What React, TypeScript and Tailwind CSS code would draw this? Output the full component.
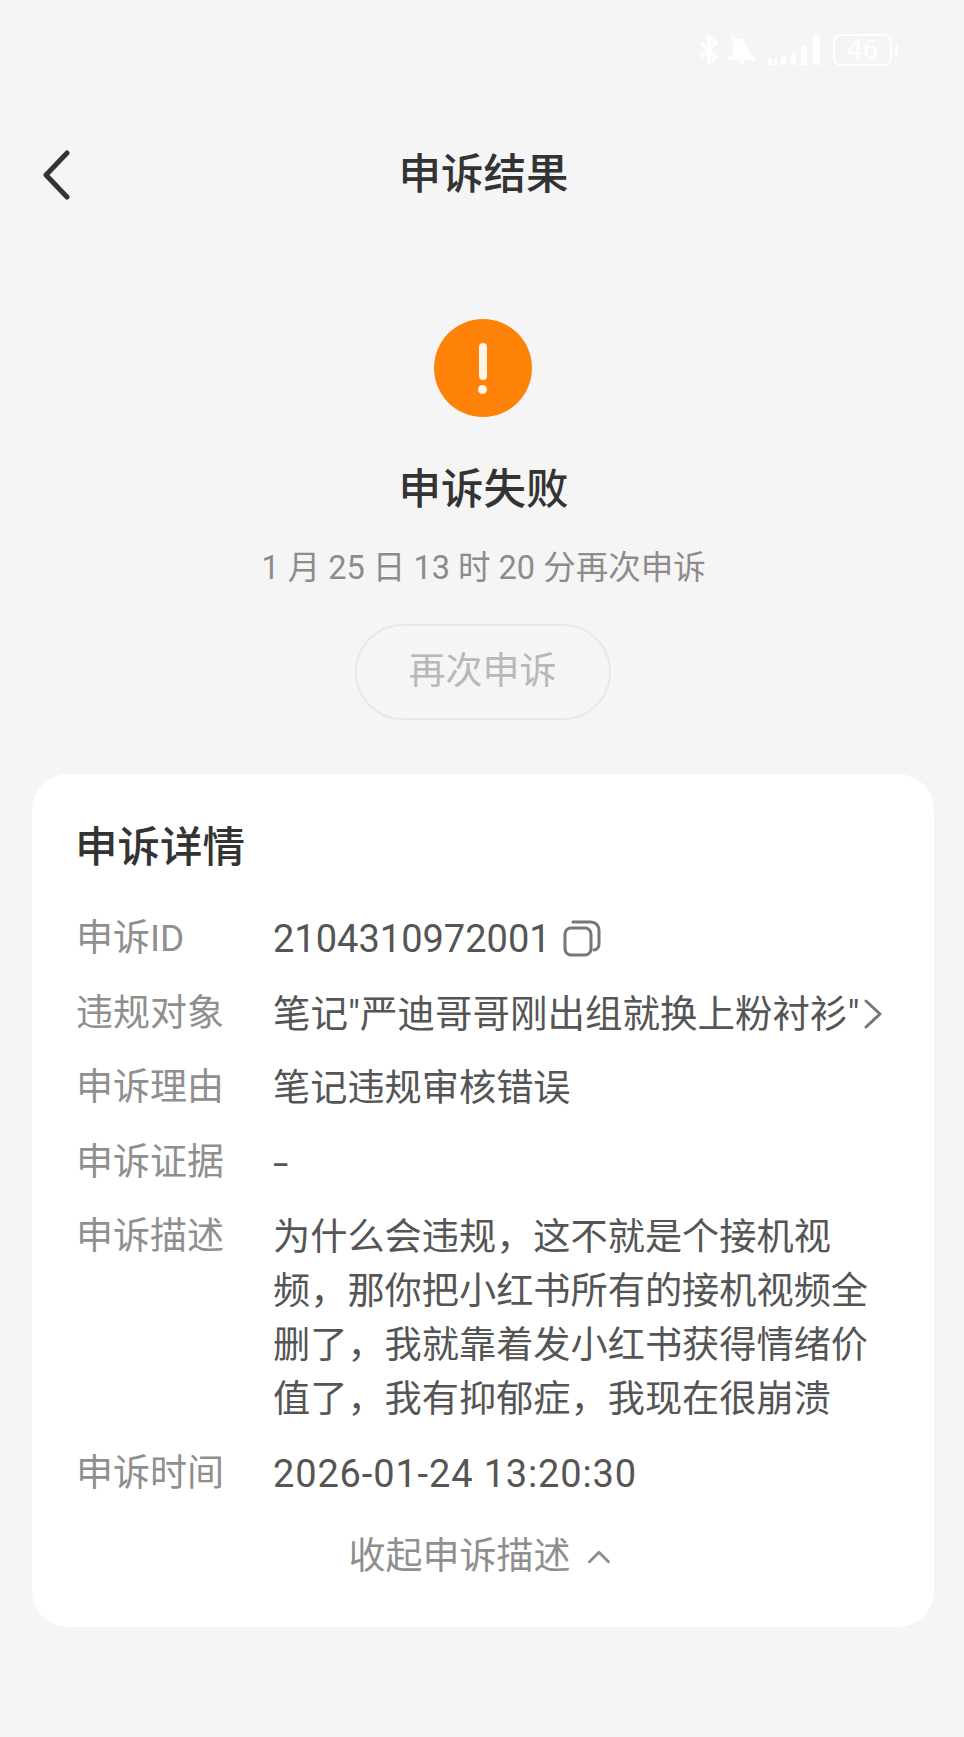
import React from 'react';
import { ChevronUp } from 'lucide-react';

const fontStack = "font-['Roboto','Noto_Sans_CJK_SC',sans-serif]";

const Row = ({ label, children }: { label: string; children: React.ReactNode }) => (
  <div className="flex">
    <div className="w-[197px] shrink-0 text-[#8f8f8f]">{label}</div>
    <div className="flex-1 text-[37.2px] text-[#555555]">{children}</div>
  </div>
);

const CopyIcon = () => (
  <svg width="38" height="38" viewBox="0 0 38 38" fill="none" stroke="#777777" strokeWidth="3">
    <rect x="2" y="9" width="26" height="27" rx="6" />
    <path d="M10 3h18a8 8 0 0 1 8 8v14a6 6 0 0 1-5 6" strokeLinecap="round" />
  </svg>
);

const StatusBar = () => (
  <div className="flex h-[66px] items-end justify-end pr-[66px] text-white">
    <div className="flex items-center">
      {/* bluetooth */}
      <svg width="20" height="30" viewBox="0 0 20 30" fill="none" stroke="white" strokeWidth="3.5">
        <path d="M2 8 L17 22 L10 28 V2 L17 8 L2 22" />
      </svg>
      {/* muted bell */}
      <svg width="30" height="28" viewBox="0 0 30 28" fill="white" className="ml-[8px]">
        <path d="M15 2c-5 0-9 4-9 10v6l-5 4v2h25z" />
        <path d="M11 25h8l-3 3h-2z" />
        <path d="M5 1 L28 25" stroke="white" strokeWidth="3.5" />
      </svg>
      <svg width="56" height="32" viewBox="0 0 56 32" fill="white" className="ml-[10px]">
        <rect x="1" y="25" width="4" height="6" />
        <rect x="7" y="25" width="3" height="6" />
        <rect x="14" y="23" width="5" height="8" />
        <rect x="24" y="19" width="5" height="12" />
        <rect x="34" y="12" width="6" height="19" />
        <rect x="46" y="1" width="7" height="30" />
      </svg>
      <div className="ml-[10px] flex h-[32px] w-[59px] items-center justify-center rounded-[8px] border-2 border-white text-[28px] leading-none">46</div>
      <div className="ml-[3px] h-[11px] w-[3px] rounded-full bg-white" />
    </div>
  </div>
);

export default function App() {
  return (
    <div className={`${fontStack} flex min-h-[1737px] flex-col bg-[#f5f5f5]`}>
      <StatusBar />

      {/* header */}
      <div className="relative mt-[65px] flex h-[88px] items-center justify-center pl-[3px]">
        <svg width="30" height="50" viewBox="0 0 30 50" fill="none" stroke="#333333" strokeWidth="5" strokeLinecap="round" strokeLinejoin="round" className="absolute left-[41px] top-[19px]">
          <path d="M26 3 L5 25 L26 47" />
        </svg>
        <h1 className="text-[42.5px] leading-[88px] font-medium text-[#333333]">申诉结果</h1>
      </div>

      {/* status */}
      <div className="mt-[100px] flex flex-col items-center pl-[1px]">
        <div className="flex h-[98px] w-[98px] flex-col items-center justify-center rounded-full bg-[#ff8208]">
          <div className="h-[37px] w-[8px] rounded-full bg-[#fff5e6]" />
          <div className="mt-[5px] h-[9px] w-[9px] rounded-full bg-[#fff5e6]" />
        </div>
        <h2 className="mt-[43px] ml-[2px] text-[42.5px] leading-[60px] font-medium text-[#333333]">申诉失败</h2>
        <p className="mt-[25px] ml-[2px] text-[32.5px] leading-[46px] text-[#8c8c8c]">1 月 25 日 13 时 20 分再次申诉</p>
        <button className="mt-[33px] h-[96px] w-[256px] rounded-full border-2 border-[#e8e8e8] text-[37px] text-[#b8b8b8]">再次申诉</button>
      </div>

      {/* details card */}
      <div className="mt-[54px] mr-[30px] ml-[32px] rounded-[36px] bg-white px-[44px] pt-[46px] pb-[43px]">
        <h3 className="-ml-[1px] text-[42.5px] leading-[56px] font-medium text-[#333333]">申诉详情</h3>
        <div className="mt-[36px] flex flex-col gap-[20.5px] text-[37px] leading-[54px]">
          <Row label="申诉ID">
            <div className="flex items-center text-[38px]">
              2104310972001
              <span className="ml-[12px] -translate-y-[1px]"><CopyIcon /></span>
            </div>
          </Row>
          <Row label="违规对象">
            <div className="flex items-center text-[37.5px] whitespace-nowrap">
              笔记"严迪哥哥刚出组就换上粉衬衫"
              <svg width="18" height="30" viewBox="0 0 18 30" fill="none" stroke="#777777" strokeWidth="3" strokeLinecap="round" strokeLinejoin="round" className="ml-[4px]">
                <path d="M2 2 L16 15 L2 28" />
              </svg>
            </div>
          </Row>
          <Row label="申诉理由">笔记违规审核错误</Row>
          <Row label="申诉证据"><span className="inline-block origin-left scale-x-150">-</span></Row>
          <Row label="申诉描述">为什么会违规，这不就是个接机视频，那你把小红书所有的接机视频全删了，我就靠着发小红书获得情绪价值了，我有抑郁症，我现在很崩溃</Row>
          <Row label="申诉时间"><span className="text-[38px] tracking-[0.85px]">2026-01-24 13:20:30</span></Row>
        </div>
        <div className="mt-[29px] flex items-center justify-center text-[37px] leading-[54px] text-[#8f8f8f]">
          收起申诉描述
          <ChevronUp size={38} strokeWidth={1.8} className="ml-[9px]" />
        </div>
      </div>
    </div>
  );
}
